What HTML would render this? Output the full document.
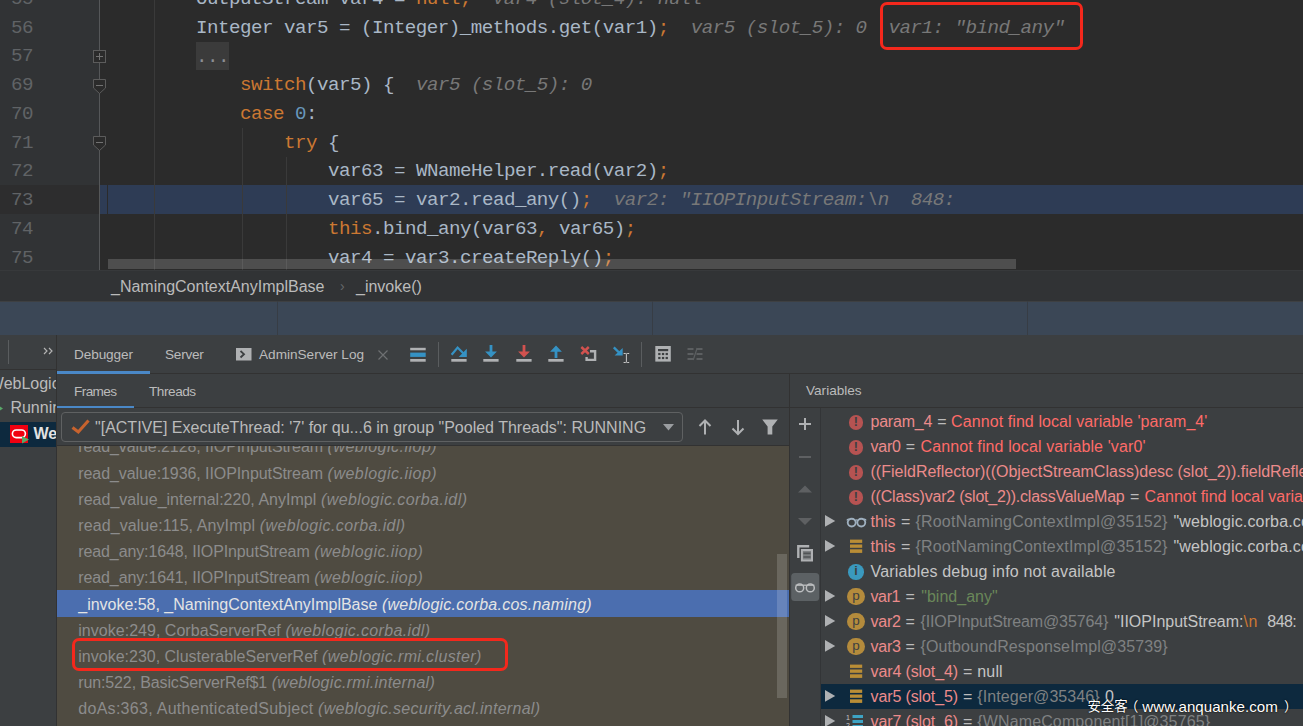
<!DOCTYPE html>
<html><head><meta charset="utf-8"><title>debug</title>
<style>
*{box-sizing:border-box;margin:0;padding:0}
html,body{width:1303px;height:726px;overflow:hidden;background:#2b2b2b}
body{position:relative;font-family:"Liberation Sans",sans-serif;color:#bbb}
.abs{position:absolute}
/* ---------- editor ---------- */
#editor{position:absolute;left:0;top:0;width:1303px;height:270px;background:#2b2b2b;overflow:hidden}
#gutter{position:absolute;left:0;top:0;width:99px;height:270px;background:#313335}
#gline{position:absolute;left:99px;top:0;width:1px;height:270px;background:#555759}
.ig{position:absolute;width:1px;background:#3a3a3a}
#exec{position:absolute;left:100px;top:185px;width:1203px;height:29px;background:#2e3c55;border-left:7px solid #2e3c55}
#exec:before{content:"";position:absolute;left:0;top:0;width:1px;height:29px;background:#2b2b2b}
#gexec{position:absolute;left:0;top:185px;width:99px;height:29px;background:#2d2d2e}
#code{position:absolute;left:0;top:-15.15px;width:1303px;font-family:"Liberation Mono",monospace;font-size:19.2px;letter-spacing:-0.521px;line-height:28.75px;color:#a9b7c6}
#code .l{position:relative;height:28.75px}
#code .n{position:absolute;left:10px;width:23px;text-align:right;color:#606366}
#code .t{position:absolute;left:0;white-space:pre}
.k{color:#cc7832}.nu{color:#6897bb}.h{color:#787878;font-style:italic}
.cur{color:#a4a3a3}

/* fold markers etc */
.fbox{position:absolute;left:93px;width:13px;height:13px;border:1px solid #5c5c5c;background:#2b2b2b}
#dots{position:absolute;left:196px;top:42px;width:33px;height:28px;background:#3b3b3b}
#hsb{position:absolute;left:108px;top:259px;width:908px;height:10px;background:rgba(255,255,255,0.17)}
/* breadcrumb */
#bc{position:absolute;left:0;top:270px;width:1303px;height:32px;background:#313335;border-top:1px solid #37393b;border-bottom:1px solid #3e4042;font-size:16px;color:#bbb}
#bc span{position:absolute;top:6px;white-space:pre;line-height:19px}
#band{position:absolute;left:0;top:302px;width:1303px;height:33px;background:#3b4756}
#band i{position:absolute;top:-1px;width:1px;height:34px;background:#373d45}
/* tool window */
#tw{position:absolute;left:0;top:335px;width:1303px;height:391px;background:#3c3f41;overflow:hidden}
#tw .hl{position:absolute;height:1px;background:#323232}
#tw .vl{position:absolute;width:1px;background:#323232}
.tab{position:absolute;font-size:13.6px;color:#bbb;white-space:pre;line-height:16px}
.ul{position:absolute;height:3px;background:#4a88c7}
#left{position:absolute;left:0;top:0;width:56px;height:391px;overflow:hidden;font-size:16px;color:#bbb}
#left span{position:absolute;white-space:pre;line-height:19px}
#combo{position:absolute;left:61px;top:77px;width:622px;height:30px;border:1px solid #5f6162;border-radius:4px;font-size:16px;color:#bbb}
#combo span{position:absolute;left:33px;top:4.7px;line-height:19px;white-space:pre}
#frames{position:absolute;left:57px;top:111px;width:732px;height:280px;background:#4f4b41;overflow:hidden;font-size:16px;color:#8c8c8c}
#frames .r{position:absolute;left:0;width:732px;height:26.15px;line-height:26.15px;white-space:pre}
#frames .r b{font-weight:normal;position:absolute;left:21.3px;top:1.5px}
#frames .r i{position:absolute;top:1.5px}
#frames .sel{background:#4b6eaf;color:#e4e4e4;height:27px}
#fsb{position:absolute;left:720px;top:108px;width:10px;height:144px;background:rgba(255,255,255,0.155)}
#vars{position:absolute;left:821px;top:74px;width:482px;height:317px;overflow:hidden;font-size:16px;color:#bbb}
#vars .r{position:absolute;left:0;width:482px;height:25px;line-height:25px;white-space:pre}
#vars .r .tx{position:absolute;left:49.5px;top:0}
.vn{color:#ec8b8b}.ve{color:#ff6b68}.vg{color:#7f8182}.vs{color:#6a8759}.vo{color:#cc7832}.vw{color:#c5c5c5}
#vars .selr{background:#0d293e}
#wm{position:absolute;left:0;top:697px;width:1303px;height:20px;color:#fff;font-family:"Liberation Sans","Noto Sans CJK SC",sans-serif;font-size:13.4px;line-height:20px;text-shadow:0 0 1px #000,0 0 2px rgba(0,0,0,.7)}
#wm span{position:absolute;top:0;white-space:pre}
#wm b{position:absolute;top:0;left:1142.3px;font-weight:normal;font-size:15.15px;white-space:pre}
.rbox{position:absolute;border:3.6px solid #f4281c;border-radius:7px}
svg{position:absolute;overflow:visible}

#vars .r span{position:absolute;top:0}
.vq{color:#bbb}
.ic{position:absolute;text-decoration:none;font-style:normal}
u.err{left:27.5px;top:6px;width:14.6px;height:14.6px;border-radius:50%;background:#b65352;color:#3c3f41;font:bold 12.5px/14.6px "Liberation Sans",sans-serif;text-align:center}
u.inf{left:27.2px;top:5.2px;width:15.4px;height:15.4px;border-radius:50%;background:#3a99be;color:#3c3f41;font:bold 12.5px/15.8px "Liberation Sans",sans-serif;text-align:center}
u.pp{left:26.2px;top:3.8px;width:17.6px;height:17.6px;border-radius:50%;background:#b48b3c;color:#3c3f41;font:13.5px/15.6px "Liberation Sans",sans-serif;text-align:center}
</style></head><body>
<div id="editor">
 <div id="gutter"></div><div id="gline"></div>
 <div id="gexec"></div><div id="exec"></div>
 <div class="ig" style="left:154px;top:0;height:270px"></div>
 <div class="ig" style="left:242px;top:128px;height:142px"></div>
 <div class="ig" style="left:286px;top:157px;height:113px"></div>
 <div id="dots"></div>
 <div id="code">
  <div class="l"><span class="n">55</span><span class="t" style="left:196px">OutputStream var4 = <span class="k">null;</span><span class="h">  var4 (slot_4): null</span></span></div>
  <div class="l"><span class="n">56</span><span class="t" style="left:196px">Integer var5 = (Integer)_methods.get(var1)<span class="k">;</span><span class="h">  var5 (slot_5): 0  var1: "bind_any"</span></span></div>
  <div class="l"><span class="n">57</span><span class="t" style="left:196px;color:#8b8f93;top:1px">...</span></div>
  <div class="l"><span class="n">69</span><span class="t" style="left:240px"><span class="k">switch</span>(var5) {<span class="h">  var5 (slot_5): 0</span></span></div>
  <div class="l"><span class="n">70</span><span class="t" style="left:240px"><span class="k">case </span><span class="nu">0</span>:</span></div>
  <div class="l"><span class="n">71</span><span class="t" style="left:284px"><span class="k">try</span> {</span></div>
  <div class="l"><span class="n">72</span><span class="t" style="left:328px">var63 = WNameHelper.read(var2)<span class="k">;</span></span></div>
  <div class="l"><span class="n cur">73</span><span class="t" style="left:328px">var65 = var2.read_any()<span class="k">;</span><span class="h">  var2: "IIOPInputStream:\n  848:</span></span></div>
  <div class="l"><span class="n">74</span><span class="t" style="left:328px"><span class="k">this</span>.bind_any(var63<span class="k">,</span> var65)<span class="k">;</span></span></div>
  <div class="l"><span class="n">75</span><span class="t" style="left:328px">var4 = var3.createReply()<span class="k">;</span></span></div>
 </div>
</div>

<div class="fbox" style="top:50px"></div>
<svg style="left:93px;top:50px" width="13" height="13"><path d="M3 6.5H10M6.5 3V10" stroke="#727272" stroke-width="1" fill="none"/></svg>
<svg style="left:93px;top:79px" width="13" height="15"><path d="M0.5 0.5H12.5V9L6.5 14.5L0.5 9Z" fill="#2b2b2b" stroke="#5c5c5c"/><path d="M3 6.5H10" stroke="#727272"/></svg>
<svg style="left:93px;top:136px" width="13" height="15"><path d="M0.5 0.5H12.5V9L6.5 14.5L0.5 9Z" fill="#2b2b2b" stroke="#5c5c5c"/><path d="M3 6.5H10" stroke="#727272"/></svg>
<div id="hsb"></div>
<div class="rbox" style="left:880px;top:2px;width:203px;height:48px"></div>
<div id="bc"><span style="left:111px">_NamingContextAnyImplBase</span><span style="left:340px;color:#66696b;font-size:14px">›</span><span style="left:356px">_invoke()</span></div>
<div id="band"><i style="left:277px"></i><i style="left:652px"></i><i style="left:1027px"></i></div>
<div id="tw">
 <div id="left">
  <div class="abs" style="left:0;top:87px;width:56px;height:25px;background:#0d293e"></div>
  <div class="abs" style="left:8px;top:5px;width:1px;height:24px;background:#5a5d5f"></div>
  <svg style="left:43px;top:12px" width="10" height="8"><path d="M1 1L4 4L1 7M6 1L9 4L6 7" stroke="#b4b4b4" stroke-width="1.15" fill="none"/></svg>
  <div class="abs" style="left:0;top:34px;width:56px;height:1px;background:#323232"></div>
  <span style="left:-11.2px;top:39px">WebLogic</span>
  <svg style="left:-4px;top:69px" width="8" height="9"><path d="M0 0L7 4.5L0 9Z" fill="#59a869"/></svg>
  <span style="left:10.4px;top:63px">Running</span>
  <svg style="left:10px;top:90px" width="19" height="19"><rect x="0" y="0" width="18" height="18" fill="#f00010"/><rect x="2.4" y="5" width="13" height="7.6" rx="3.8" fill="none" stroke="#fff" stroke-width="1.6"/><path d="M12 11L19 14.5L12 18.5Z" fill="#59a869"/></svg>
  <span style="left:33.5px;top:89px;font-weight:bold;color:#e2e2e2">WebLogic</span>
 </div>
 <div class="vl" style="left:56px;top:0;height:391px"></div>
 <!-- top tab row -->
 <span class="tab" style="left:74px;top:12px;letter-spacing:-0.1px">Debugger</span>
 <span class="tab" style="left:165px;top:12px;letter-spacing:-0.25px">Server</span>
 <svg style="left:236px;top:13px" width="16" height="13"><rect x="0" y="0" width="15.5" height="12.5" fill="#afb1b3"/><path d="M4.5 3L8 6.2L4.5 9.5" stroke="#3c3f41" stroke-width="1.8" fill="none"/></svg>
 <span class="tab" style="left:259px;top:12px;">AdminServer Log</span>
 <svg style="left:378px;top:15px" width="10" height="10"><path d="M0.5 0.5L9.5 9.5M9.5 0.5L0.5 9.5" stroke="#6e7072" stroke-width="1.2"/></svg>
 <div class="hl" style="left:57px;top:38px;width:1246px"></div>
 <div class="ul" style="left:57px;top:36px;width:93px"></div>
 <!-- toolbar icons -->
 <svg id="tb" style="left:400px;top:0" width="320" height="40">
  <g fill="#afb1b3">
   <rect x="10.2" y="12.8" width="15.5" height="2.5"/><rect x="10.2" y="24" width="15.5" height="2.7"/>
   <rect x="51.3" y="24" width="15.3" height="2.7"/><rect x="83.3" y="24" width="15.3" height="2.7"/>
   <rect x="116.3" y="24" width="15.3" height="2.7"/><rect x="148.3" y="24" width="15.3" height="2.7"/>
  </g>
  <rect x="10.2" y="17.6" width="15.5" height="4.3" fill="#3592c4"/>
  <rect x="38" y="7" width="1" height="25" fill="#5a5d5f"/>
  <rect x="241" y="7" width="1" height="25" fill="#5a5d5f"/>
  <path d="M51.6 19.8L57.6 12.6L63.5 18.6" stroke="#3592c4" stroke-width="2.2" fill="none"/>
  <path d="M66.8 13.8V21.9H58.7Z" fill="#3592c4"/>
  <path d="M89.6 10H92.4V16.4H96.9L91 22.4L85.1 16.4H89.6Z" fill="#3592c4"/>
  <path d="M122.6 10H125.4V16.4H129.9L124 22.4L118.1 16.4H122.6Z" fill="#d2524f"/>
  <path d="M154.6 23H157.4V16.8H161.9L156 10.6L150.1 16.8H154.6Z" fill="#3592c4"/>
  <path d="M181.3 12L188.8 19M188.8 12L181.3 19" stroke="#d2524f" stroke-width="2.4" fill="none"/>
  <path d="M190 16.2H195.1V24.9H186.6V22.1" stroke="#afb1b3" stroke-width="2.4" fill="none"/>
  <path d="M213.8 12.4L220.5 19" stroke="#3592c4" stroke-width="2.4" fill="none"/>
  <path d="M222.7 12.9V20.5H214.6Z" fill="#3592c4"/>
  <path d="M223.6 18.5H225.6Q226.4 18.5 226.4 19.5V26.5Q226.4 27.5 225.6 27.5H223.6M229.2 18.5H227.2Q226.4 18.5 226.4 19.5M226.4 26.5Q226.4 27.5 227.2 27.5H229.2" stroke="#c8c8c8" stroke-width="1" fill="none"/>
  <rect x="255.3" y="11" width="15.5" height="15.6" fill="#afb1b3"/>
  <g fill="#3c3f41"><rect x="258" y="14" width="10.2" height="2.2"/>
   <rect x="258.2" y="17.9" width="2.3" height="2.2"/><rect x="261.9" y="17.9" width="2.3" height="2.2"/><rect x="265.6" y="17.9" width="2.3" height="2.2"/>
   <rect x="258.2" y="21.9" width="2.3" height="2.2"/><rect x="261.9" y="21.9" width="2.3" height="2.2"/><rect x="265.6" y="21.9" width="2.3" height="2.2"/></g>
  <g fill="#5c5f61"><rect x="287.5" y="13" width="6" height="2"/><rect x="287.5" y="18" width="6" height="2"/><rect x="287.5" y="23" width="6" height="2"/>
   <rect x="296.5" y="13" width="6" height="2"/><rect x="296.5" y="18" width="6" height="2"/><rect x="296.5" y="23" width="6" height="2"/></g>
  <path d="M297.2 13L293.2 25" stroke="#5c5f61" stroke-width="1.2"/>
 </svg>
 <!-- second row -->
 <span class="tab" style="left:74px;top:49px;letter-spacing:-0.6px">Frames</span>
 <span class="tab" style="left:149px;top:49px;letter-spacing:-0.45px">Threads</span>
 <span class="tab" style="left:806px;top:48px;">Variables</span>
 <div class="hl" style="left:57px;top:72px;width:1246px"></div>
 <div class="ul" style="left:57px;top:70.6px;width:77px;height:2.6px"></div>
 <div class="vl" style="left:789px;top:39px;height:352px"></div>
 <!-- combo -->
 <div id="combo"><svg style="left:9px;top:6px" width="20" height="16"><path d="M1.5 8.5L7.3 13L17.5 1.5" stroke="#c8632e" stroke-width="3.1" fill="none"/></svg><span>"[ACTIVE] ExecuteThread: '7' for qu...6 in group "Pooled Threads": RUNNING</span>
  <svg style="left:601px;top:11px" width="12" height="7"><path d="M0 0H11L5.5 6.5Z" fill="#9a9da0"/></svg></div>
 <svg style="left:697px;top:84px" width="90" height="17"><g stroke="#afb1b3" stroke-width="2" fill="none"><path d="M8 15.5V2M2.5 7L8 1.5L13.5 7"/><path d="M41 1V14.5M35.5 9.5L41 15L46.5 9.5"/></g><path d="M65.2 0.5H80.8L75.3 7.5V15.5H70.6V7.5Z" fill="#afb1b3"/></svg>
 <div class="hl" style="left:57px;top:110px;width:732px"></div>
 <!-- frames -->
 <div id="frames">
  <div class="r" style="top:-13.1px"><b style="letter-spacing:-0.080px">read_value:2128, IIOPInputStream</b><i style="left:270.6px;letter-spacing:0.482px">(weblogic.iiop)</i></div>
  <div class="r" style="top:13.1px"><b style="letter-spacing:-0.080px">read_value:1936, IIOPInputStream</b><i style="left:270.6px;letter-spacing:0.482px">(weblogic.iiop)</i></div>
  <div class="r" style="top:39.2px"><b style="letter-spacing:0.016px">read_value_internal:220, AnyImpl</b><i style="left:263.9px;letter-spacing:0.433px">(weblogic.corba.idl)</i></div>
  <div class="r" style="top:65.4px"><b style="letter-spacing:0.085px">read_value:115, AnyImpl</b><i style="left:202.8px;letter-spacing:0.398px">(weblogic.corba.idl)</i></div>
  <div class="r" style="top:91.5px"><b style="letter-spacing:-0.117px">read_any:1648, IIOPInputStream</b><i style="left:257.2px;letter-spacing:0.456px">(weblogic.iiop)</i></div>
  <div class="r" style="top:117.7px"><b style="letter-spacing:-0.117px">read_any:1641, IIOPInputStream</b><i style="left:257.2px;letter-spacing:0.456px">(weblogic.iiop)</i></div>
  <div class="r sel" style="top:144px"><b style="letter-spacing:-0.019px">_invoke:58, _NamingContextAnyImplBase</b><i style="left:324.9px;letter-spacing:0.235px">(weblogic.corba.cos.naming)</i></div>
  <div class="r" style="top:170.0px"><b style="letter-spacing:0.023px">invoke:249, CorbaServerRef</b><i style="left:228.4px;letter-spacing:0.358px">(weblogic.corba.idl)</i></div>
  <div class="r" style="top:196.1px"><b style="letter-spacing:-0.001px">invoke:230, ClusterableServerRef</b><i style="left:265.1px;letter-spacing:0.380px">(weblogic.rmi.cluster)</i></div>
  <div class="r" style="top:222.3px"><b style="letter-spacing:-0.132px">run:522, BasicServerRef$1</b><i style="left:214.7px;letter-spacing:0.300px">(weblogic.rmi.internal)</i></div>
  <div class="r" style="top:248.4px"><b style="letter-spacing:0.279px">doAs:363, AuthenticatedSubject</b><i style="left:261.1px;letter-spacing:0.284px">(weblogic.security.acl.internal)</i></div>
  <div id="fsb"></div>
 </div>
 <div class="rbox" style="left:72px;top:303px;width:436px;height:33px"></div>
 <!-- var toolbar -->
 <div class="vl" style="left:820px;top:73px;height:318px;background:#333537"></div>
 <svg style="left:790px;top:73px" width="30" height="220">
  <path d="M9 16H21M15 10V22" stroke="#afb1b3" stroke-width="2"/>
  <path d="M9 49H21" stroke="#5e6062" stroke-width="2"/>
  <path d="M8 84.5H22L15 77.5Z" fill="#5e6062"/>
  <path d="M8 110H22L15 117Z" fill="#5e6062"/>
  <path d="M8.3 150V138.3H19.2" fill="none" stroke="#afb1b3" stroke-width="2.4"/><rect x="10.9" y="141" width="12.1" height="12.5" fill="#afb1b3"/><rect x="12.9" y="143" width="8.1" height="8.5" fill="#7d8082"/><path d="M13.4 145.4H20.6M13.4 149H20.6" stroke="#505355" stroke-width="1.7"/>
  <rect x="1.2" y="165" width="28" height="28" rx="3.5" fill="#5c6164"/>
  <g fill="none" stroke="#bcbec0" stroke-width="1.5"><ellipse cx="9.7" cy="179.9" rx="4" ry="3.85"/><ellipse cx="20.3" cy="179.9" rx="4" ry="3.85"/><path d="M5.6 177.2H24.4" stroke-width="1.3"/></g>
 </svg>
 <div id="vars">
 <div class="r" style="top:0px"><u class="ic err">!</u><span class="vn" style="left:49.5px;letter-spacing:-0.222px">param_4</span><span class="vq" style="left:116.3px">=</span><span class="ve" style="left:130.1px;letter-spacing:0.084px">Cannot find local variable 'param_4'</span></div>
 <div class="r" style="top:25px"><u class="ic err">!</u><span class="vn" style="left:49.5px;letter-spacing:-0.206px">var0</span><span class="vq" style="left:84.8px">=</span><span class="ve" style="left:99.5px;letter-spacing:0.114px">Cannot find local variable 'var0'</span></div>
 <div class="r" style="top:50px"><u class="ic err">!</u><span class="vn" style="left:49.5px;letter-spacing:0.007px">((FieldReflector)((ObjectStreamClass)desc (slot_2)).fieldRefl</span><span class="vn" style="left:477.6px">ectors</span></div>
 <div class="r" style="top:75px"><u class="ic err">!</u><span class="vn" style="left:49.5px;letter-spacing:-0.222px">((Class)var2 (slot_2)).classValueMap</span><span class="vq" style="left:308.9px">=</span><span class="ve" style="left:323.6px">Cannot find local variable</span></div>
 <div class="r" style="top:100px"><svg class="ic" style="left:3.8px;top:5.8px" width="11" height="12"><path d="M0 0L10.2 5.9L0 11.8Z" fill="#afb1b3"/></svg><svg class="ic" style="left:25px;top:7px" width="21" height="12"><g fill="none" stroke="#9fb0bf" stroke-width="1.85"><ellipse cx="5.7" cy="6.6" rx="4" ry="3.9"/><ellipse cx="15.3" cy="6.6" rx="4" ry="3.9"/><path d="M0.9 4.4Q1.3 2.9 3 3.1M20.1 4.4Q19.7 2.9 18 3.1M9.2 4.4Q10.5 3.4 11.8 4.4" stroke-width="1.3"/></g></svg><span class="vn" style="left:49.5px;letter-spacing:0.073px">this</span><span class="vq" style="left:79.9px">=</span><span class="vg" style="left:94.4px;letter-spacing:0.227px">{RootNamingContextImpl@35152}</span><span class="vw" style="left:352.5px;letter-spacing:0.155px">"weblogic.corba.cos</span></div>
 <div class="r" style="top:125px"><svg class="ic" style="left:3.8px;top:5.8px" width="11" height="12"><path d="M0 0L10.2 5.9L0 11.8Z" fill="#afb1b3"/></svg><svg class="ic" style="left:29px;top:5px" width="13" height="15"><g fill="#b98d36"><rect x="0" y="0.6" width="12.2" height="3.3"/><rect x="0" y="5.5" width="12.2" height="3.3"/><rect x="0" y="10.3" width="12.2" height="3.6"/></g></svg><span class="vn" style="left:49.5px;letter-spacing:0.073px">this</span><span class="vq" style="left:79.9px">=</span><span class="vg" style="left:94.4px;letter-spacing:0.227px">{RootNamingContextImpl@35152}</span><span class="vw" style="left:352.5px;letter-spacing:0.155px">"weblogic.corba.cos</span></div>
 <div class="r" style="top:150px"><u class="ic inf">i</u><span class="vw" style="left:49.5px;letter-spacing:0.183px">Variables debug info not available</span></div>
 <div class="r" style="top:175px"><svg class="ic" style="left:3.8px;top:5.8px" width="11" height="12"><path d="M0 0L10.2 5.9L0 11.8Z" fill="#afb1b3"/></svg><u class="ic pp">p</u><span class="vn" style="left:49.5px;letter-spacing:-0.381px">var1</span><span class="vq" style="left:84.6px">=</span><span class="vs" style="left:100.2px;letter-spacing:0.019px">"bind_any"</span></div>
 <div class="r" style="top:200px"><svg class="ic" style="left:3.8px;top:5.8px" width="11" height="12"><path d="M0 0L10.2 5.9L0 11.8Z" fill="#afb1b3"/></svg><u class="ic pp">p</u><span class="vn" style="left:49.5px;letter-spacing:-0.206px">var2</span><span class="vq" style="left:84.6px">=</span><span class="vg" style="left:99.5px;letter-spacing:-0.126px">{IIOPInputStream@35764}</span><span class="vw" style="left:293.3px;letter-spacing:-0.006px">"IIOPInputStream:</span><span class="vo" style="left:422.5px;letter-spacing:0.478px">\n</span><span class="vw" style="left:446.3px;letter-spacing:-0.560px">848:</span></div>
 <div class="r" style="top:225px"><svg class="ic" style="left:3.8px;top:5.8px" width="11" height="12"><path d="M0 0L10.2 5.9L0 11.8Z" fill="#afb1b3"/></svg><u class="ic pp">p</u><span class="vn" style="left:49.5px;letter-spacing:-0.206px">var3</span><span class="vq" style="left:84.6px">=</span><span class="vg" style="left:99.5px;letter-spacing:0.115px">{OutboundResponseImpl@35739}</span></div>
 <div class="r" style="top:250px"><svg class="ic" style="left:29px;top:5px" width="13" height="15"><g fill="#b98d36"><rect x="0" y="0.6" width="12.2" height="3.3"/><rect x="0" y="5.5" width="12.2" height="3.3"/><rect x="0" y="10.3" width="12.2" height="3.6"/></g></svg><span class="vn" style="left:49.5px;letter-spacing:-0.117px">var4 (slot_4)</span><span class="vq" style="left:142.1px">=</span><span class="vw" style="left:156.3px;letter-spacing:0.148px">null</span></div>
 <div class="r selr" style="top:275px"><svg class="ic" style="left:3.8px;top:5.8px" width="11" height="12"><path d="M0 0L10.2 5.9L0 11.8Z" fill="#afb1b3"/></svg><svg class="ic" style="left:29px;top:5px" width="13" height="15"><g fill="#b98d36"><rect x="0" y="0.6" width="12.2" height="3.3"/><rect x="0" y="5.5" width="12.2" height="3.3"/><rect x="0" y="10.3" width="12.2" height="3.6"/></g></svg><span class="vn" style="left:49.5px;letter-spacing:-0.117px">var5 (slot_5)</span><span class="vq" style="left:142.1px">=</span><span class="vg" style="left:156.3px;letter-spacing:0.078px">{Integer@35346}</span><span class="vw" style="left:283.9px">0</span></div>
 <div class="r" style="top:300px"><svg class="ic" style="left:3.8px;top:5.8px" width="11" height="12"><path d="M0 0L10.2 5.9L0 11.8Z" fill="#afb1b3"/></svg><svg class="ic" style="left:24px;top:4px" width="20" height="17"><g fill="#3da3c4"><rect x="7.5" y="2" width="10.5" height="3"/><rect x="7.5" y="7" width="10.5" height="3"/><rect x="7.5" y="12" width="10.5" height="3"/></g><text x="1" y="6.5" font-size="7" fill="#c8c8c8" font-family="Liberation Sans,sans-serif">1</text><text x="1" y="15" font-size="7" fill="#c8c8c8" font-family="Liberation Sans,sans-serif">2</text></svg><span class="vn" style="left:49.5px;letter-spacing:-0.117px">var7 (slot_6)</span><span class="vq" style="left:142.1px">=</span><span class="vg" style="left:156.3px;letter-spacing:0.127px">{WNameComponent[1]@35765}</span></div> </div>
</div>
<div id="wm"><span style="left:1087.4px">安全客</span><span style="left:1125px">（</span><b>www.anquanke.com</b><span style="left:1284px">）</span></div>
</body></html>
